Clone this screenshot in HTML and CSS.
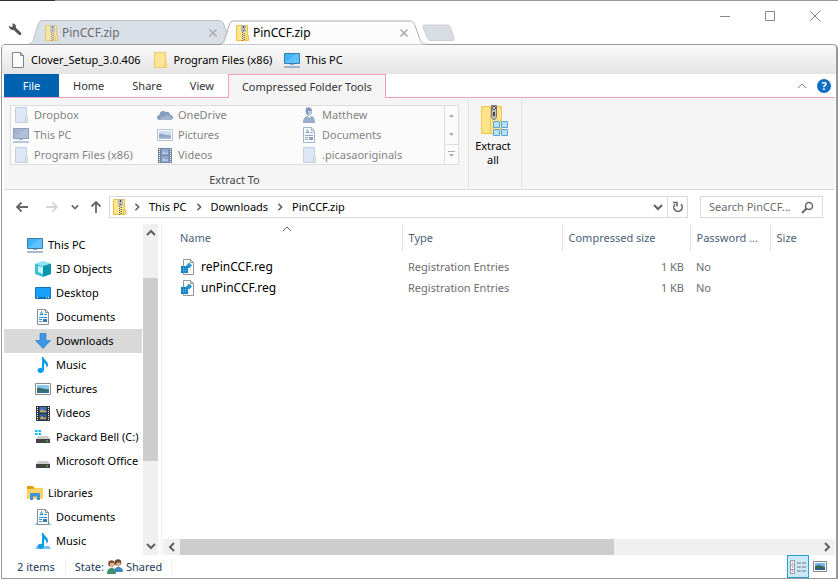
FILE: index.html
```html
<!DOCTYPE html>
<html lang="en"><head>
  <meta charset="utf-8">
  <meta name="viewport" content="width=device-width, initial-scale=1.0">
  <title>PinCCF.zip</title>
  <link rel="stylesheet" href="styles.css">
</head>
<body>
  <!-- Shared icons -->
  <svg class="sprite" aria-hidden="true">
    <symbol id="i-zip" viewBox="0 0 16 16">
      <path d="M1.500 .5h11v10h1v5h-12z" fill="#ffe68d" stroke="#ecc240"/>
      <path d="M11.500 15V10.500h2" fill="none" stroke="#ecc240"/>
      <path d="M6 0h5v7H6z" fill="#b9b9b9"/>
      <path d="M8 1h1v2H8zM8 5h1v1H8z" fill="#444"/>
      <path d="M7.500 7v9M9.500 8v8" stroke="#666" stroke-dasharray="1 1"/>
      <path d="M8.500 8v8" stroke="#aaa" stroke-dasharray="1 1"/>
    </symbol>
    <symbol id="i-folder" viewBox="0 0 16 16">
      <path d="M2.500 .5h11v10h1v5h-12z" fill="#ffe595" stroke="#efca5c"/>
      <path d="M12.500 15v-4.500h1.500" fill="none" stroke="#efca5c"/>
    </symbol>
    <symbol id="i-folder-off" viewBox="0 0 16 16">
      <path d="M2.500 .5h11v10h1v5h-12z" fill="#dce6f4" stroke="#c3d1e6"/>
      <path d="M12.500 15v-4.500h1.500" fill="none" stroke="#c3d1e6"/>
    </symbol>
    <symbol id="i-pc-off" viewBox="0 0 16 16">
      <path d="M.5 1.500h15v10H.5z" fill="#a3b5d0" stroke="#8a9dbc"/>
      <path d="M1 11L12 2h3v9z" fill="#bac8dd" opacity=".6"/>
      <path d="M6 12.500h4" stroke="#aab9d0"/>
      <path d="M0 15h16" stroke="#a5b5ce" stroke-width="1.500"/>
    </symbol>
    <symbol id="i-pic-off" viewBox="0 0 16 16">
      <path d="M.5 2.500h15v11H.5z" fill="#fff" stroke="#b3c1d8"/>
      <path d="M2 4h12v8H2z" fill="#cfdcee"/>
      <path d="M2 7c3-1 5 1 12 1.500V10H2z" fill="#90a6c8"/>
      <path d="M2 10h12v2H2z" fill="#a4b6d2"/>
    </symbol>
    <symbol id="i-doc-off" viewBox="0 0 16 16">
      <path d="M2.500 .5h8l3 3v12h-11z" fill="#fff" stroke="#a3b3ce"/>
      <path d="M10.500 .5v3h3" fill="none" stroke="#a3b3ce"/>
      <path d="M5 6.500l1.500-4L8 6.500M5.500 5.500h2M9 5.500h3M4 8.500h8M4 10.500h3M4 12.500h3" fill="none" stroke="#8ba2c6"/>
      <path d="M8 10h4v3H8z" fill="#8ba2c6"/>
    </symbol>
    <symbol id="i-video-off" viewBox="0 0 16 16">
      <path d="M1 1h14v15H1z" fill="#7185a6"/>
      <path d="M2.500 2v13M13.500 2v13" stroke="#fff" stroke-dasharray="1 1"/>
      <path d="M4.500 2h7v6h-7zM4.500 9h7v6h-7z" fill="#90a8cb"/>
      <path d="M5 6l2-2 2 2 2-1v2H5zM5 13l2-2 2 2 2-1v2H5z" fill="#b9c9df"/>
    </symbol>
    <symbol id="i-page" viewBox="0 0 16 16">
      <path d="M2.500 .5h8l3 3v12h-11z" fill="#fbfbfb" stroke="#828282"/>
      <path d="M10.500 .5v3h3" fill="none" stroke="#828282"/>
    </symbol>
    <symbol id="i-pc" viewBox="0 0 16 16">
      <path d="M.5 1.500h15v10H.5z" fill="#3fb4fa" stroke="#3c7ea8"/>
      <path d="M1 11L12 2h3v9z" fill="#74cbff" opacity=".6"/>
      <path d="M6 12.500h4" stroke="#8eabc2"/>
      <path d="M0 15h16" stroke="#8aa0b8" stroke-width="1.500"/>
    </symbol>
    <symbol id="i-cube" viewBox="0 0 16 16">
      <path d="M8 0l8 2.500L8 5 0 2.500z" fill="#8fe2ee"/>
      <path d="M0 2.500L8 5v11l-8-3z" fill="#40bfd2"/>
      <path d="M16 2.500L8 5v11l8-3z" fill="#0794ad"/>
      <path d="M3 5l5 1v7l-5-2z" fill="#c8f5f9"/>
    </symbol>
    <symbol id="i-desktop" viewBox="0 0 16 16">
      <path d="M.5 2.500h15v11H.5z" fill="#18a0fb" stroke="#1474b8"/>
      <path d="M1 12.500h14" stroke="#0b67ad"/>
      <path d="M2 12.500h1M11 12.500h1M13 12.500h1" stroke="#fff"/>
    </symbol>
    <symbol id="i-doc" viewBox="0 0 16 16">
      <path d="M2.500 .5h8l3 3v12h-11z" fill="#fff" stroke="#8a8f94"/>
      <path d="M10.500 .5v3h3" fill="none" stroke="#8a8f94"/>
      <path d="M5 6.500l1.500-4L8 6.500M5.500 5.500h2M9 5.500h3M4 8.500h8M4 10.500h3M4 12.500h3" fill="none" stroke="#2f8fd2"/>
      <path d="M8 10h4v3H8z" fill="#347ca8"/>
    </symbol>
    <symbol id="i-down" viewBox="0 0 16 16">
      <path d="M5 .5h6v7h4.500L8 15.500.5 7.500H5z" fill="#3b96e6" stroke="#2377c4" stroke-width=".6"/>
    </symbol>
    <symbol id="i-music" viewBox="0 0 16 16">
      <path d="M7 0h1.500c.2 3 4.500 4 4.500 7.500 0 1.500-.7 2.500-1.500 3.300.3-2.800-.8-4-2.500-4.800V12.500C9 14.500 7.500 16 5.300 16 3.600 16 2.500 15 2.500 13.600c0-1.800 2-3.200 4.500-2.600z" fill="#119cee"/>
    </symbol>
    <symbol id="i-pic" viewBox="0 0 16 16">
      <path d="M.5 2.500h15v11H.5z" fill="#fff" stroke="#8c8c8c"/>
      <path d="M2 4h12v8H2z" fill="#8bc4ef"/>
      <path d="M2 7c3-1 5 1 12 1.500V10H2z" fill="#33705e"/>
      <path d="M2 10h12v2H2z" fill="#3a6b96"/>
    </symbol>
    <symbol id="i-video" viewBox="0 0 16 16">
      <path d="M1 1h14v15H1z" fill="#333"/>
      <path d="M2.500 2v13M13.500 2v13" stroke="#fff" stroke-dasharray="1 1"/>
      <path d="M4.500 2h7v6h-7z" fill="#3b75c5"/>
      <path d="M4.500 9h7v6h-7z" fill="#2d5f9c"/>
      <path d="M5 6l2-2 2 2 2-1v2H5zM5 13l2-2 2 2 2-1v2H5z" fill="#d9a343"/>
    </symbol>
    <symbol id="i-drive" viewBox="0 0 16 16">
      <path d="M3 8h10l2 3H1z" fill="#ccc"/>
      <path d="M1 11h14v4H1z" fill="#444"/>
      <path d="M11 13h2" stroke="#4de04d"/>
    </symbol>
    <symbol id="i-windrive" viewBox="0 0 16 16">
      <path d="M0 1h2.500v2H0zM3.500 1H6v2H3.500zM0 4h2.500v2H0zM3.500 4H6v2H3.500z" fill="#12b6ee"/>
      <path d="M3 7h10l2 3H1z" fill="#ccc"/>
      <path d="M1 10h14v4H1z" fill="#444"/>
      <path d="M11 12h2" stroke="#4de04d"/>
    </symbol>
    <symbol id="i-library" viewBox="0 0 16 16">
      <path d="M0 1h6l1.500 2H16v11H0z" fill="#fcd265"/>
      <path d="M0 1h6l1.500 2L6 4H0z" fill="#dda00c"/>
      <path d="M3 9.500C3 8.500 3.500 8 4.500 8h7c1 0 1.500.5 1.500 1.500V15h-3v-3.500H6V15H3z" fill="#3d93dc"/>
    </symbol>
    <symbol id="i-stand" viewBox="0 0 16 16">
      <path d="M2 13h12l2 3H0z" fill="#7cc6f5"/>
    </symbol>
    <symbol id="i-cloud" viewBox="0 0 16 16">
      <path d="M3 13C1 13 0 11.800 0 10.500 0 9 1 8 2.500 8 2.500 5.500 4 4 6 4c1.300 0 2 .4 2.700 1.200C11 4 13 5.500 13.300 8 15 8 16 9 16 10.500S15 13 13.500 13z" fill="#879bbd"/>
      <path d="M3 13c0-3 2.500-4 4.500-3C9 7.500 13 7.500 13.300 10c2 0 2.700 1 2.200 2-.4.700-1 1-2 1z" fill="#a3b4cf"/>
    </symbol>
    <symbol id="i-user" viewBox="0 0 16 16">
      <path d="M5 1c2-1.500 6-1 6 3 0 3-1.500 4.500-3 4.500S4.500 7 4.500 4z" fill="#8497b8"/>
      <path d="M7 4h3.500c0 2.500-1 4-2 4S7 6 7 4z" fill="#c0cee1"/>
      <path d="M2 16c0-5 2-7 5-7l1.500 2L10 9c3 0 4 3 4 7z" fill="#9aadcb"/>
    </symbol>
    <symbol id="i-reg" viewBox="0 0 16 16">
      <path d="M3.500 .5h7l3 3v12h-10z" fill="#fafafa" stroke="#979797"/>
      <path d="M10.500 .5v3h3" fill="none" stroke="#979797"/>
      <path d="M1 7h7v7H1z" fill="#0a77bd"/>
      <path d="M1 9.500h7M1 11.500h7M3.500 7v7M5.500 7v7" stroke="#54b0e3" stroke-width=".6"/>
      <path d="M6 7l3-3.500 3 3L9 9.500z" fill="#2494d4"/>
    </symbol>
    <symbol id="i-chev" viewBox="0 0 10 10">
      <path d="M1 3l4 4 4-4" fill="none" stroke="currentColor" stroke-width="2"/>
    </symbol>
    <symbol id="i-thin" viewBox="0 0 10 10">
      <path d="M1 3l4 4 4-4" fill="none" stroke="currentColor"/>
    </symbol>
    <symbol id="i-x" viewBox="0 0 10 10">
      <path d="M1.500 1.500l7 7M8.500 1.500l-7 7" fill="none" stroke="currentColor" stroke-width="1.500"/>
    </symbol>
    <symbol id="i-tab" viewBox="0 0 206 24">
      <path class="shape" d="M0 24C4 23.500 4 21 5 18L9 5C10 2 11 .5 14 .5H189C193 .5 194 2 195 5l5 14c1 3 2 4.500 6 4.500V24z"/>
      <path class="edge" d="M0 23.500C4 23 4 21 5 18L9 5C10 2 11 .5 14 .5H189C193 .5 194 2 195 5l5 14c1 3 2 4.500 6 4.500"/>
    </symbol>
  </svg>

  <div class="window">
    <!-- Tab strip -->
    <header class="titlebar">
      <button class="wrench" aria-label="Settings">
        <svg width="14" height="14" viewBox="0 0 14 14"><path d="M1 2.500l2.300 1.800 1.400-1L4.300.6C6.500 0 8.500 2 7.800 4.700l5.300 5c1 1.300-.7 3-2 2.200L5.600 7C3.300 7.600.5 5.500 1 2.500z" fill="#555"/></svg>
      </button>
      <nav class="tabs">
        <div class="tab">
          <svg class="tab-bg"><use href="#i-tab"/></svg>
          <svg class="icon"><use href="#i-zip"/></svg>
          <a class="tab-name" href="#">PinCCF.zip</a>
          <button class="tab-close" aria-label="Close tab"><svg class="glyph"><use href="#i-x"/></svg></button>
        </div>
        <div class="tab active">
          <svg class="tab-bg"><use href="#i-tab"/></svg>
          <svg class="icon"><use href="#i-zip"/></svg>
          <a class="tab-name" href="#">PinCCF.zip</a>
          <button class="tab-close" aria-label="Close tab"><svg class="glyph"><use href="#i-x"/></svg></button>
        </div>
        <button class="new-tab" aria-label="New tab">
          <svg width="34" height="18" viewBox="0 0 34 18"><path d="M4 1h22c2 0 3 1 3.500 2.500l3.500 11c.5 1.500 0 2-1.500 2H10c-2 0-3-1-3.500-2L2 3.500C1.500 2 2 1 4 1z" fill="#d8dde4" stroke="#cdd1d6"/></svg>
        </button>
      </nav>
      <div class="controls">
        <button aria-label="Minimize"><svg width="12" height="12" viewBox="0 0 12 12"><path d="M1 6.500h10" stroke="#888"/></svg></button>
        <button aria-label="Maximize"><svg width="12" height="12" viewBox="0 0 12 12"><path d="M1.500 1.500h9v9h-9z" fill="none" stroke="#888"/></svg></button>
        <button aria-label="Close"><svg width="12" height="12" viewBox="0 0 12 12"><path d="M1 1l10 10M11 1L1 11" stroke="#888"/></svg></button>
      </div>
    </header>

    <div class="frame">
      <nav class="bookmarks">
        <a href="#"><svg class="icon"><use href="#i-page"/></svg>Clover_Setup_3.0.406</a>
        <a href="#"><svg class="icon"><use href="#i-folder"/></svg>Program Files (x86)</a>
        <a href="#"><svg class="icon"><use href="#i-pc"/></svg>This PC</a>
      </nav>

      <!-- Ribbon -->
      <div class="ribbon-tabs">
        <button class="file">File</button>
        <button>Home</button>
        <button>Share</button>
        <button>View</button>
        <button class="current">Compressed Folder Tools</button>
        <div class="ribbon-help">
          <button aria-label="Collapse ribbon"><svg class="glyph up"><use href="#i-thin"/></svg></button>
          <button class="help" aria-label="Help">?</button>
        </div>
      </div>
      <div class="ribbon">
        <section class="group">
          <div class="gallery">
            <div class="places">
              <button><svg class="icon"><use href="#i-folder-off"/></svg>Dropbox</button>
              <button><svg class="icon"><use href="#i-cloud"/></svg>OneDrive</button>
              <button><svg class="icon"><use href="#i-user"/></svg>Matthew</button>
              <button><svg class="icon"><use href="#i-pc-off"/></svg>This PC</button>
              <button><svg class="icon"><use href="#i-pic-off"/></svg>Pictures</button>
              <button><svg class="icon"><use href="#i-doc-off"/></svg>Documents</button>
              <button><svg class="icon"><use href="#i-folder-off"/></svg>Program Files (x86)</button>
              <button><svg class="icon"><use href="#i-video-off"/></svg>Videos</button>
              <button><svg class="icon"><use href="#i-folder-off"/></svg>.picasaoriginals</button>
            </div>
            <div class="gallery-scroll">
              <button aria-label="Previous row"><svg width="7" height="7" viewBox="0 0 7 7"><path d="M1 5h5L3.500 2z" fill="#a5abb2"/></svg></button>
              <button aria-label="Next row"><svg width="7" height="7" viewBox="0 0 7 7"><path d="M1 2h5L3.500 5z" fill="#a5abb2"/></svg></button>
              <button aria-label="More"><svg width="7" height="7" viewBox="0 0 7 7"><path d="M0 .5h7" stroke="#a5abb2"/><path d="M1 3h5L3.500 6z" fill="#a5abb2"/></svg></button>
            </div>
          </div>
          <h2>Extract To</h2>
        </section>
        <section class="group extract">
          <button>
            <svg width="30" height="32" viewBox="-2 0 30 32">
              <path d="M1.500 2.500h20v27h-20z" fill="#ffe38a" stroke="#f0c84c"/>
              <path d="M10.500 2v28" stroke="#f0c84c"/>
              <path d="M11.500 1.500h5V12c0 2-1 3.500-2.500 3.500S11.500 14 11.500 12z" fill="#bdbdbd" stroke="#777"/>
              <circle cx="14" cy="4" r="1.500" fill="#fff" stroke="#444"/>
              <path d="M14 8v4" stroke="#444" stroke-width="2"/>
              <path d="M13.500 17.500h6v6h-6zM21.500 17.500h6v6h-6zM13.500 25.500h6v6h-6zM21.500 25.500h6v6h-6z" fill="#b5e2fb" stroke="#5fa3d6"/>
            </svg>
            <span>Extract<br>all</span>
          </button>
        </section>
      </div>

      <!-- Address bar -->
      <div class="navbar">
        <div class="history">
          <button aria-label="Back"><svg width="14" height="12" viewBox="0 0 14 12"><path d="M13 6H2M6.500 1.500L2 6l4.500 4.500" fill="none" stroke="#666" stroke-width="1.800"/></svg></button>
          <button aria-label="Forward"><svg width="14" height="12" viewBox="0 0 14 12"><path d="M1 6h11M7.500 1.500L12 6l-4.500 4.500" fill="none" stroke="#d5d5d5" stroke-width="1.800"/></svg></button>
          <button class="recent" aria-label="Recent locations"><svg width="8" height="8" viewBox="0 0 10 10"><use href="#i-chev"/></svg></button>
          <button class="parent" aria-label="Up"><svg width="12" height="14" viewBox="0 0 12 14"><path d="M6 13V2M1.500 6.500L6 2l4.500 4.500" fill="none" stroke="#666" stroke-width="1.800"/></svg></button>
        </div>
        <div class="address">
          <svg class="icon"><use href="#i-zip"/></svg>
          <svg class="glyph side"><use href="#i-chev"/></svg>
          <a href="#">This PC</a>
          <svg class="glyph side"><use href="#i-chev"/></svg>
          <a href="#">Downloads</a>
          <svg class="glyph side"><use href="#i-chev"/></svg>
          <a href="#">PinCCF.zip</a>
          <button class="drop" aria-label="Previous locations"><svg class="glyph"><use href="#i-chev"/></svg></button>
          <button class="refresh" aria-label="Refresh"><svg width="12" height="12" viewBox="0 0 12 12"><path d="M3 3.200A4.200 4.200 0 1 0 9 3.200M1 1.500h4V5.500" fill="none" stroke="#666" stroke-width="1.600"/></svg></button>
        </div>
        <div class="search">
          <input type="text" aria-label="Search PinCCF.zip" placeholder="Search PinCCF...">
          <svg width="13" height="13" viewBox="0 0 13 13"><circle cx="8" cy="5" r="3.500" fill="none" stroke="#666" stroke-width="1.500"/><path d="M5.500 7.500L1 12" stroke="#666" stroke-width="2"/></svg>
        </div>
      </div>

      <main class="main">
        <aside class="sidebar">
          <nav class="tree">
            <a class="root" href="#"><svg class="icon"><use href="#i-pc"/></svg>This PC</a>
            <a href="#"><svg class="icon"><use href="#i-cube"/></svg>3D Objects</a>
            <a href="#"><svg class="icon"><use href="#i-desktop"/></svg>Desktop</a>
            <a href="#"><svg class="icon"><use href="#i-doc"/></svg>Documents</a>
            <a class="selected" href="#"><svg class="icon"><use href="#i-down"/></svg>Downloads</a>
            <a href="#"><svg class="icon"><use href="#i-music"/></svg>Music</a>
            <a href="#"><svg class="icon"><use href="#i-pic"/></svg>Pictures</a>
            <a href="#"><svg class="icon"><use href="#i-video"/></svg>Videos</a>
            <a href="#"><svg class="icon"><use href="#i-windrive"/></svg>Packard Bell (C:)</a>
            <a href="#"><svg class="icon"><use href="#i-drive"/></svg>Microsoft Office</a>
            <a class="root libraries" href="#"><svg class="icon"><use href="#i-library"/></svg>Libraries</a>
            <a href="#"><svg class="icon"><use href="#i-stand"/><use href="#i-doc"/></svg>Documents</a>
            <a href="#"><svg class="icon"><use href="#i-stand"/><use href="#i-music"/></svg>Music</a>
          </nav>
          <div class="vscroll">
            <button aria-label="Scroll up"><svg class="glyph up"><use href="#i-chev"/></svg></button>
            <div class="track"><div class="thumb"></div></div>
            <button aria-label="Scroll down"><svg class="glyph"><use href="#i-chev"/></svg></button>
          </div>
        </aside>

        <div class="content">
          <table class="files">
            <colgroup><col class="c-name"><col class="c-type"><col class="c-packed"><col class="c-pass"><col></colgroup>
            <thead>
              <tr>
                <th>Name<svg class="glyph up sort"><use href="#i-thin"/></svg></th>
                <th>Type</th>
                <th>Compressed size</th>
                <th>Password ...</th>
                <th>Size</th>
              </tr>
            </thead>
            <tbody>
              <tr>
                <td><a href="#"><svg class="icon"><use href="#i-reg"/></svg>rePinCCF.reg</a></td>
                <td>Registration Entries</td>
                <td class="num">1 KB</td>
                <td>No</td>
                <td></td>
              </tr>
              <tr>
                <td><a href="#"><svg class="icon"><use href="#i-reg"/></svg>unPinCCF.reg</a></td>
                <td>Registration Entries</td>
                <td class="num">1 KB</td>
                <td>No</td>
                <td></td>
              </tr>
            </tbody>
          </table>
          <div class="hscroll">
            <button aria-label="Scroll left"><svg class="glyph left"><use href="#i-chev"/></svg></button>
            <div class="track"><div class="thumb"></div></div>
            <button aria-label="Scroll right"><svg class="glyph side"><use href="#i-chev"/></svg></button>
          </div>
        </div>
      </main>

      <footer class="status">
        <span class="count">2 items</span>
        <span class="state">State:
          <svg width="16" height="16" viewBox="0 0 16 16">
            <circle cx="4.500" cy="4.500" r="3.300" fill="#7b5238"/><path d="M3 4h4v3.500L5 9 3 7z" fill="#e5b48e"/>
            <path d="M0 15c0-4 1.500-6 5-6s4 3 4 6z" fill="#3d9272"/>
            <circle cx="11" cy="3.500" r="3.300" fill="#684737"/><path d="M9.500 3.500h4V6l-2 2-2-2z" fill="#e5b48e"/>
            <path d="M7.500 13c0-3.500 1-5 4-5s4.500 2.500 4.500 5z" fill="#3d88c5"/>
          </svg>
          Shared</span>
        <div class="views">
          <button class="on" aria-label="Details">
            <svg width="18" height="14" viewBox="0 0 18 14"><path d="M1.500 .5h4v13h-4zM1.500 5h4M1.500 9.500h4" fill="#fff" stroke="#999"/><path d="M8 3h4M13 3h4M8 7h4M13 7h4M8 11h4M13 11h4" stroke="#777"/><path d="M3 3h1M3 7h1M3 11h1" stroke="#3a78c4"/></svg>
          </button>
          <button aria-label="Large icons">
            <svg width="14" height="12" viewBox="0 0 14 12"><path d="M.5 .5h13v10H.5z" fill="#fff" stroke="#888"/><path d="M2 2h10v4H2z" fill="#78b4f5"/><path d="M2 5l4-1 6 2v1H2z" fill="#3a6b50"/><path d="M2 7h10v2H2z" fill="#2d5d86"/></svg>
          </button>
        </div>
      </footer>
    </div>
  </div>
</body>
</html>
```

FILE: styles.css
```css
* {
  box-sizing: border-box;
}
body {
  margin: 0;
  background: white;
  color: #000;
  font-family: "Noto Sans", "Open Sans", sans-serif;
  font-size: 11px;
  line-height: 16px;
}
a {
  color: inherit;
  text-decoration: none;
}
button {
  display: flex;
  align-items: center;
  justify-content: center;
  padding: 0;
  border: none;
  background: none;
  color: inherit;
  font: inherit;
}
svg {
  flex: none;
}
.sprite {
  display: none;
}
.icon {
  width: 16px;
  height: 16px;
}
.glyph {
  width: 10px;
  height: 10px;
  color: #606060;
}
.up {
  transform: rotate(180deg);
}
.side {
  transform: rotate(-90deg);
}
.left {
  transform: rotate(90deg);
}
.window {
  display: flex;
  flex-direction: column;
  min-height: 100vh;
  padding: 1px 0 2px 1px;
  background: linear-gradient(90deg, #333 55px, #999 55px) no-repeat top / 100% 1px;
}

/* tab strip */
.titlebar {
  display: flex;
  height: 43px;
}
.wrench {
  width: 28px;
  padding-top: 14px;
}
.tabs {
  display: flex;
  flex: 1;
  align-items: flex-end;
}
.tab {
  position: relative;
  display: flex;
  align-items: center;
  gap: 2px;
  width: 206px;
  height: 24px;
  padding: 1px 17px 0 15px;
  color: #6b6b6b;
  font-size: 12px;
}
.tab.active {
  z-index: 1;
  height: 25px;
  margin: 0 0 -1px -15px;
  color: #000;
}
.tab-bg {
  position: absolute;
  left: 0;
  top: 0;
  width: 100%;
  height: 100%;
  fill: #d9dfe6;
}
.tab-bg use {
  stroke: #b8bfc7;
}
.tab.active .tab-bg {
  fill: #fcfcfc;
}
.tab.active .tab-bg use {
  stroke: #adadad;
}
.shape {
  stroke: none;
}
.edge {
  fill: none;
}
.tab .icon, .tab-name, .tab-close {
  position: relative;
}
.tab:not(.active) .icon {
  opacity: 0.7;
}
.tab-name {
  flex: 1;
}
.tab-close .glyph {
  color: #aaa;
}
.new-tab {
  height: 22px;
  margin-left: -5px;
}
.controls {
  display: flex;
  height: 30px;
  padding-right: 1px;
}
.controls button {
  width: 45px;
}

.frame {
  display: flex;
  flex: 1;
  flex-direction: column;
  padding: 0 1px 0 2px;
  border: 1px solid #999;
  border-right: 2px solid #999;
  border-radius: 5px 5px 0 0;
}
.bookmarks {
  display: flex;
  gap: 12px;
  height: 29px;
  margin: 0 -1px 0 -2px;
  padding: 0 8px;
  border-radius: 4px 4px 0 0;
  background: linear-gradient(#fafafa, #e4e4e4);
}
.bookmarks a {
  display: flex;
  align-items: center;
  gap: 5px;
}

/* ribbon */
.ribbon-tabs {
  display: flex;
  height: 24px;
  border-bottom: 1px solid #f79ac0;
  color: #333;
}
.ribbon-tabs button {
  padding: 0 14px;
}
.ribbon-tabs .file {
  width: 55px;
  background: #0063b1;
  color: white;
}
.ribbon-tabs .current {
  height: 24px;
  padding: 0 13px;
  border: 1px solid #f79ac0;
  border-bottom: none;
  background: #f5f5f5;
}
.ribbon-help {
  display: flex;
  align-items: center;
  gap: 10px;
  margin-left: auto;
  padding-right: 4px;
}
.ribbon-help .glyph {
  color: #888;
}
.ribbon-help button {
  padding: 0;
}
.ribbon-help .help {
  width: 14px;
  height: 14px;
  border-radius: 7px;
  background: #0e6fc4;
  color: white;
  font-weight: bold;
}
.ribbon {
  display: flex;
  height: 92px;
  border-bottom: 1px solid #dadbdc;
  background: #f5f5f5;
}
.group {
  margin: 2px 0;
  padding: 5px 9px 0 6px;
  border-right: 1px solid #e2e3e4;
}
.gallery {
  display: flex;
  width: 449px;
  height: 60px;
  border: 1px solid #dcdddd;
  background: #fbfbfb;
}
.places {
  display: grid;
  flex: 1;
  grid-template-columns: 144px 144px 1fr;
  grid-auto-rows: 20px;
  margin-top: -1px;
  padding-left: 2px;
}
.places button {
  justify-content: flex-start;
  gap: 5px;
  color: #838383;
  white-space: nowrap;
}
.gallery-scroll {
  display: grid;
  width: 14px;
  border-left: 1px solid #dcdddd;
}
.gallery-scroll button + button + button {
  border-top: 1px solid #dcdddd;
}
.group h2 {
  margin: 7px 0 0;
  color: #444;
  font-size: 11px;
  font-weight: normal;
  text-align: center;
}
.extract {
  width: 53px;
  padding: 4px 4px 0 0;
}
.extract button {
  flex-direction: column;
  gap: 3px;
  width: 100%;
  line-height: 14px;
}

/* address bar */
.navbar {
  display: flex;
  gap: 12px;
  padding: 6px 12px 6px 0;
}
.history {
  display: flex;
  width: 105px;
  margin-right: -12px;
  padding-left: 11px;
}
.history button {
  width: 14px;
  margin-right: 16px;
}
.history .recent {
  width: 8px;
  margin: 0 10px 0 -4px;
  color: #666;
}
.history .parent {
  margin: 0;
}
.address {
  display: flex;
  flex: 1;
  align-items: center;
  height: 22px;
  padding-left: 2px;
  border: 1px solid #d9d9d9;
}
.address > .glyph {
  width: 8px;
  height: 8px;
  margin: 0 8px;
}
.address .icon + .glyph {
  margin-left: 5px;
}
.address .drop {
  width: 20px;
  height: 20px;
  margin-left: auto;
  border-right: 1px solid #d9d9d9;
}
.address .refresh {
  width: 19px;
}
.search {
  display: flex;
  align-items: center;
  width: 123px;
  padding: 0 8px;
  border: 1px solid #d9d9d9;
}
.search input {
  flex: 1;
  min-width: 0;
  padding: 0;
  border: none;
  font: inherit;
  outline: none;
}
.search input::placeholder {
  color: #6d6d6d;
  opacity: 1;
}

.main {
  display: grid;
  flex: 1;
  grid-template-columns: 158px 1fr;
  min-height: 331px;
}
.sidebar {
  display: flex;
  gap: 1px;
  height: 100%;
  border-right: 1px solid #f0f0f0;
}
.tree {
  width: 138px;
  padding-top: 9px;
  overflow: hidden;
}
.tree a {
  display: flex;
  align-items: center;
  gap: 5px;
  height: 24px;
  padding-left: 31px;
  white-space: nowrap;
}
.tree .root {
  padding-left: 23px;
}
.tree .libraries {
  margin-top: 8px;
}
.tree .selected {
  background: #d9d9d9;
}
.vscroll {
  display: flex;
  flex-direction: column;
  width: 15px;
  background: #f0f0f0;
}
.vscroll button {
  height: 18px;
}
.track {
  flex: 1;
}
.thumb {
  background: #cdcdcd;
}
.vscroll .thumb {
  height: 62%;
  margin-top: 36px;
}
.content {
  display: flex;
  flex-direction: column;
  justify-content: space-between;
  padding-left: 1px;
}
.files {
  width: 100%;
  border-collapse: collapse;
  table-layout: fixed;
  color: #6d6d6d;
}
.c-name {
  width: 239px;
}
.c-type {
  width: 160px;
}
.c-packed {
  width: 128px;
}
.c-pass {
  width: 80px;
}
.files th {
  position: relative;
  height: 27px;
  padding: 0 6px;
  border-right: 1px solid #e5e5e5;
  color: #4c607a;
  font-weight: normal;
  text-align: left;
  white-space: nowrap;
}
.files th:first-child {
  padding-left: 17px;
}
.files th:last-child {
  border-right: none;
}
.sort {
  position: absolute;
  left: 50%;
  top: 0;
}
.files tbody::before {
  content: "";
  display: block;
  height: 5px;
}
.files td {
  height: 21px;
  padding: 0 6px;
}
.files td:first-child {
  padding-left: 17px;
}
.files td a {
  display: flex;
  align-items: center;
  gap: 5px;
  color: #000;
  font-size: 12px;
}
.files .num {
  text-align: right;
}
.hscroll {
  display: flex;
  height: 16px;
  background: #f0f0f0;
}
.hscroll button {
  width: 17px;
}
.hscroll .thumb {
  width: 68%;
  height: 100%;
}

.status {
  display: flex;
  align-items: center;
  height: 23px;
  padding-left: 13px;
  color: #1e395b;
}
.state {
  display: flex;
  align-items: center;
  gap: 3px;
  margin-left: 10px;
  padding: 0 9px;
  border-left: 1px solid #f0f0f0;
  border-right: 1px solid #f0f0f0;
}
.views {
  display: flex;
  gap: 4px;
  margin-left: auto;
  padding-right: 8px;
}
.views button {
  height: 23px;
}
.views .on {
  width: 22px;
  border: 1px solid #26a0da;
  background: #cbe8f6;
}
```
